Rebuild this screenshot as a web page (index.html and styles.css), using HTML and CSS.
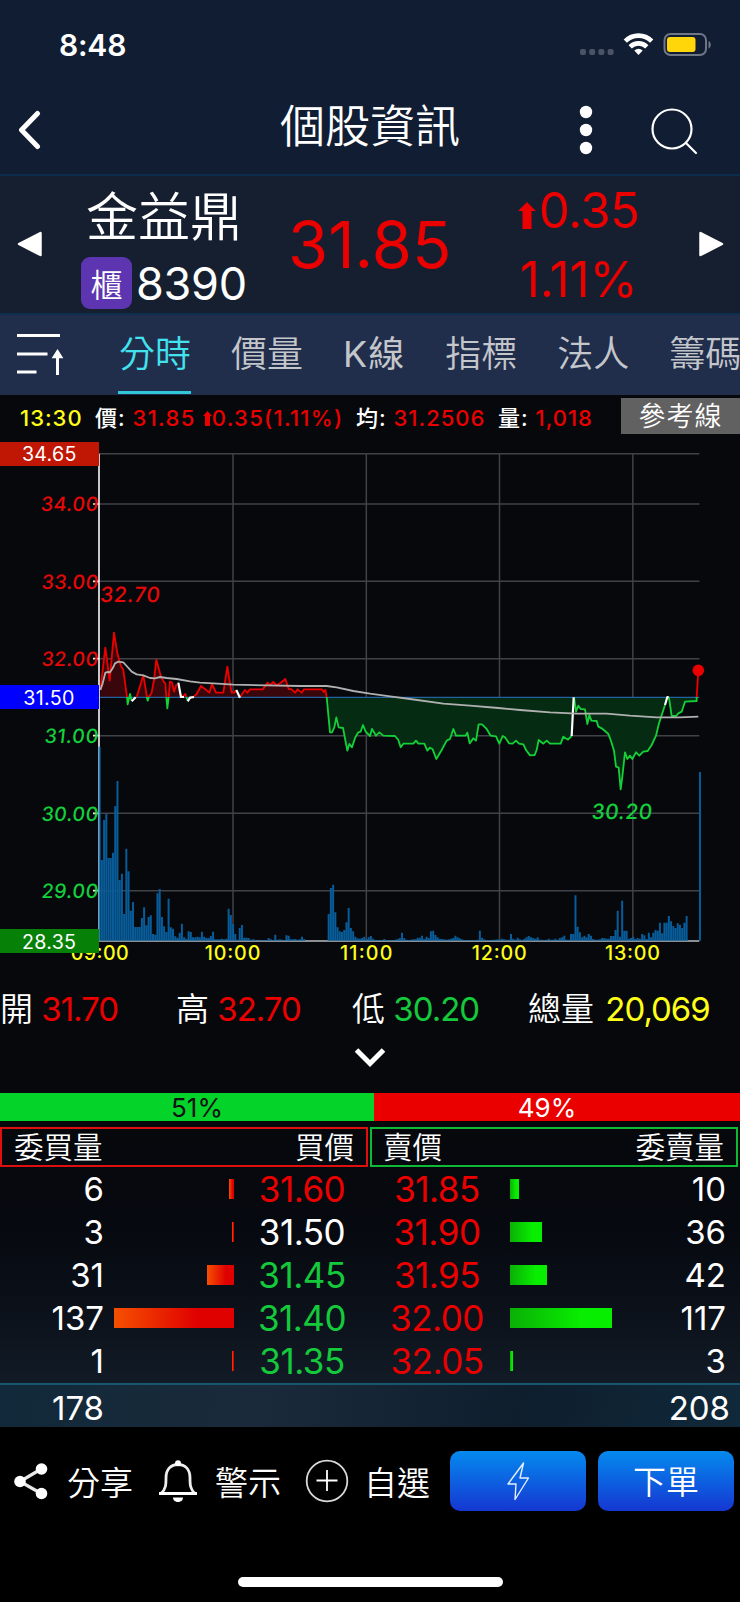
FILE: index.html
```html
<!DOCTYPE html>
<html lang="zh-Hant">
<head>
<meta charset="utf-8">
<title>個股資訊</title>
<link rel="stylesheet" href="styles.css">
</head>
<body>
<div class="app">
  <div class="status">
    <span class="clock">8:48</span>
    <svg class="status-icons" width="136" height="26" viewBox="0 0 136 26">
      <g fill="#4b5467"><rect x="2" y="18" width="6" height="6" rx="2"/><rect x="11.200" y="18" width="6" height="6" rx="2"/><rect x="20.400" y="18" width="6" height="6" rx="2"/><rect x="29.600" y="18" width="6" height="6" rx="2"/></g>
      <g fill="none" stroke="#fff" stroke-width="4.600"><path d="M47.300 10.200a18.500 18.500 0 0 1 26.400 0"/><path d="M52.200 15.800a11.800 11.800 0 0 1 16.600 0"/></g>
      <path d="M56.300 19.500a6.500 6.500 0 0 1 8.400 0L60.500 24z" fill="#fff"/>
      <rect x="86.500" y="3" width="41.500" height="21" rx="6" fill="none" stroke="#6f7787" stroke-width="2"/>
      <rect x="89" y="6" width="28.500" height="15" rx="3" fill="#ffd60a"/>
      <path d="M130.500 10c3 1 3 6.500 0 7.500z" fill="#6f7787"/>
    </svg>
  </div>
  <header class="header">
    <svg class="back" width="24" height="40" viewBox="0 0 24 40"><path d="M20.500 3.500 4.500 20l16 16.500" fill="none" stroke="#fff" stroke-width="5" stroke-linecap="round" stroke-linejoin="round"/></svg>
    <h1 class="title">個股資訊</h1>
    <svg class="more" width="14" height="50" viewBox="0 0 14 50" fill="#fff"><circle cx="7" cy="7" r="6.200"/><circle cx="7" cy="25" r="6.200"/><circle cx="7" cy="43" r="6.200"/></svg>
    <svg class="search" width="48" height="48" viewBox="0 0 48 48" fill="none" stroke="#fff" stroke-width="2.200" stroke-linecap="round"><circle cx="22" cy="22" r="19.500"/><path d="M36 36l10 10"/></svg>
  </header>
  <section class="stock">
    <svg class="prev" width="26" height="28" viewBox="0 0 26 28"><path d="M2 14 23.500 3v22z" fill="#fff" stroke="#fff" stroke-width="2.500" stroke-linejoin="round"/></svg>
    <div class="ident">
      <div class="name">金益鼎</div>
      <div class="code-row"><span class="badge">櫃</span><span class="code">8390</span></div>
    </div>
    <div class="price">31.85</div>
    <div class="change">
      <div class="delta"><svg width="18" height="27" viewBox="0 0 18 27"><path d="M9 0l9 9h-4.500v18h-9V9H0z" fill="#eb0000"/></svg><span>0.35</span></div>
      <div class="percent">1.11%</div>
    </div>
    <svg class="next" width="26" height="28" viewBox="0 0 26 28"><path d="M24 14 2.500 3v22z" fill="#fff" stroke="#fff" stroke-width="2.500" stroke-linejoin="round"/></svg>
  </section>
  <nav class="tabs">
    <svg class="sort" width="50" height="46" viewBox="0 0 50 46" stroke="#fff" stroke-width="3"><path d="M0 3.500h43M0 22h30.500M0 40h19.500M40.500 43V24"/><path d="M40.500 18.500l4.500 7h-9z" fill="#fff" stroke-width="1.500"/></svg>
    <span class="tab active">分時</span><span class="tab">價量</span><span class="tab kline">K線</span><span class="tab">指標</span><span class="tab">法人</span><span class="tab">籌碼</span>
  </nav>
  <section class="tick">
    <span class="yellow t-time">13:30</span>
    <span class="t-price">價: <b class="red">31.85 <svg width="9" height="15" viewBox="0 0 9 15"><path d="M4.500 0 9 5H7v10H2V5H0z" fill="#eb0000"/></svg>0.35(1.11%)</b></span>
    <span class="t-avg">均: <b class="red">31.2506</b></span>
    <span class="t-vol">量: <b class="red">1,018</b></span>
    <span class="ref-line">參考線</span>
  </section>
  <svg class="chart" width="740" height="530" viewBox="0 150 2220 1590">
    <g stroke="#404248" stroke-width="4.500" fill="none">
      <path d="M297 191H2098M297 342H2098M297 574H2098M297 806H2098M297 1037H2098M297 1270H2098M297 1502H2098"/>
      <path d="M699 191V1652M1099 191V1652M1498.500 191V1652M1898.500 191V1652"/>
    </g>
    <path class="fill-down" d="M980 921L990 1027 996 1027 1003 1012 1009 982 1016 1012 1029 1014 1042 1082 1048 1062 1056 1072 1066 1042 1075 1027 1082 1025 1089 1005 1097 1025 1110 1038 1116 1017 1128 1037 1138 1027 1150 1037 1185 1038 1195 1050 1202 1072 1210 1061 1240 1061 1248 1052 1255 1061 1273 1061 1282 1082 1290 1073 1298 1078 1309 1107 1325 1080 1340 1052 1350 1047 1360 1017 1368 1037 1397 1037 1402 1028 1409 1060 1420 1045 1428 1052 1436 1003 1446 1003 1460 1017 1472 1037 1488 1039 1498 1061 1508 1038 1515 1042 1527 1060 1538 1061 1548 1052 1557 1061 1570 1063 1578 1080 1590 1096 1604 1095 1610 1080 1616 1050 1630 1061 1640 1052 1650 1061 1682 1061 1690 1040 1704 1049 1715 1038 1721 922 1728 965 1735 947 1742 957 1755 958 1762 1002 1768 975 1774 992 1790 993 1795 1010 1805 1015 1815 1023 1825 1032 1832 1050 1842 1082 1848 1130 1856 1133 1862 1198 1867 1160 1875 1087 1882 1107 1890 1097 1897 1107 1908 1087 1918 1097 1930 1085 1943 1083 1955 1065 1968 1037 1977 1000 1995 945 2002 921 2006 921 2015 978 2035 970 2045 965 2055 935 2090 933 2090 921z"/>
    <path class="fill-up" d="M301 921V900L316 773 329 872 342 728 352 790 362 826 370 840 381 921 410 921 430 856 441 921 455 908 462 870 469 809 483 860 493 878 499 921 506 921 510 875 516 878 522 905 535 880 543 921 580 921 603 888 628 908 636 882 648 908 670 908 682 830 695 908 710 900 720 921 735 900 742 908 750 898 788 898 803 878 810 886 820 876 830 886 842 878 856 867 866 897 875 898 885 908 893 898 905 908 912 898 976 900 980 921z"/>
    <path d="M297 922H2098" stroke="#2461a0" stroke-width="4"/>
    <g fill="none" stroke-width="5.500" stroke-linejoin="round">
      <path stroke="#eb0000" d="M301 900L316 773 329 872 342 728 352 790 362 826 370 840 381 921M410 921L430 856 441 921M447 921L455 908 462 870 469 809 483 860 493 878 496 880 499 921M506 921L510 875 516 878 522 905 530 882M547 921L556 912 559 921M580 921L590 912 603 888 615 897 628 908 636 882 648 908 670 908 682 830 690 880 695 908 703 908 708 900M720 921L735 900 742 908 750 898 788 898 803 878 810 886 820 876 830 886 842 878 856 867 866 897 875 898 885 908 893 898 905 908 912 898 966 898 971 906 976 900 980 921M2090 921L2095 842"/>
      <path stroke="#14cf38" d="M381 921L383 943 390 912 395 932M440 921L443 932 447 921M499 921L502 955 506 921M559 921L563 932M980 921L990 1027 996 1027 1003 1012 1009 982 1016 1012 1029 1014 1042 1082 1048 1062 1056 1072 1066 1042 1075 1027 1082 1025 1089 1005 1097 1025 1110 1038 1116 1017 1128 1037 1138 1027 1150 1037 1185 1038 1195 1050 1202 1072 1210 1061 1240 1061 1248 1052 1255 1061 1273 1061 1282 1082 1290 1073 1298 1078 1309 1107 1325 1080 1340 1052 1350 1047 1360 1017 1368 1037 1397 1037 1402 1028 1409 1060 1420 1045 1428 1052 1436 1003 1446 1003 1460 1017 1472 1037 1488 1039 1498 1061 1508 1038 1515 1042 1527 1060 1538 1061 1548 1052 1557 1061 1570 1063 1578 1080 1590 1096 1604 1095 1610 1080 1616 1050 1630 1061 1640 1052 1650 1061 1682 1061 1690 1040 1704 1049 1715 1038M1722 922L1728 965 1735 947 1742 957 1755 958 1762 1002 1768 975 1774 992 1790 993 1795 1010 1805 1015 1815 1023 1825 1032 1832 1050 1842 1082 1848 1130 1856 1133 1862 1198 1867 1160 1875 1087 1882 1107 1890 1097 1897 1107 1908 1087 1918 1097 1930 1085 1943 1083 1955 1065 1968 1037 1977 1000 1995 945M2006 921L2008 930 2015 978 2028 978 2035 970 2045 965 2055 935 2090 933V921"/>
      <path stroke="#fff" stroke-width="6.500" d="M395 934L407 922M535 878L539 900 543 921 552 921M563 934L570 923 582 921M709 900L720 923M1715 1038L1721 922M1995 945L2002 921 2006 921"/>
      <path stroke="#b0b0b0" d="M301 900L308 880 316 848 324 846 330 847 338 835 345 820 355 815 370 817 380 828 395 845 410 853 430 856 450 864 465 865 480 861 500 864 530 867 570 874 600 878 640 880 700 884 800 886 900 888 980 888 1010 892 1060 903 1110 911 1170 919 1230 927 1330 941 1410 947 1495 954 1560 960 1650 967 1730 971 1820 971 1890 977 1970 982 2040 982 2095 980"/>
    </g>
    <circle cx="2095" cy="841" r="17.500" fill="#eb0000"/>
    <path d="M297 191V1652M279 342h18M279 574h18M279 806h18M279 1037h18M279 1270h18M279 1502h18" stroke="#eee" stroke-width="5"/>
    <path d="M295 1653H2098" stroke="#b9bcc0" stroke-width="4"/>
    <path id="volume" stroke="#075c99" stroke-width="6"/>
    <path d="M297 1070V1652" stroke="#5b9cc8" stroke-width="3"/>
    <g class="axis slanted red">
      <text x="123" y="364" textLength="172">34.00</text><text x="125" y="596" textLength="170">33.00</text><text x="125" y="828" textLength="170">32.00</text>
      <text class="peak" x="301" y="636" textLength="179">32.70</text>
    </g>
    <g class="axis slanted green">
      <text x="134" y="1060" textLength="161">31.00</text><text x="125" y="1293" textLength="170">30.00</text><text x="125" y="1525" textLength="170">29.00</text>
      <text class="peak" x="1775" y="1286" textLength="182">30.20</text>
    </g>
    <g class="axis yellow">
      <text x="212" y="1711" textLength="174">09:00</text><text x="614" y="1711" textLength="167">10:00</text><text x="1020" y="1711" textLength="157">11:00</text><text x="1415" y="1711" textLength="165">12:00</text><text x="1815" y="1711" textLength="165">13:00</text>
    </g>
    <rect x="0" y="156" width="297" height="72" fill="#c01604"/><rect x="0" y="885" width="297" height="72" fill="#00f"/><rect x="0" y="1617" width="297" height="72" fill="#078007"/>
    <g class="box"><text x="66" y="214" textLength="163">34.65</text><text x="70" y="944" textLength="153">31.50</text><text x="66" y="1676" textLength="162">28.35</text></g>
  </svg>
  <section class="ohlc">
    <div>開 <span class="red">31.70</span></div><div>高 <span class="red">32.70</span></div><div>低 <span class="green">30.20</span></div><div class="total">總量 <span class="yellow">20,069</span></div>
  </section>
  <div class="expand"><svg width="34" height="22" viewBox="0 0 34 22"><path d="M3.500 4 17 17.500 30.500 4" fill="none" stroke="#fff" stroke-width="5"/></svg></div>
  <div class="ratio"><div class="buy">51%</div><div class="sell">49%</div></div>
  <section class="book">
    <div class="book-head"><div class="bid-head"><span>委買量</span><span>買價</span></div><div class="ask-head"><span>賣價</span><span>委賣量</span></div></div>
    <div class="book-row"><span class="qty">6</span><span class="bar"><i style="width:5px"></i></span><span class="p red">31.60</span><span class="p red">31.85</span><span class="bar ask"><i style="width:9px"></i></span><span class="qty">10</span></div>
    <div class="book-row"><span class="qty">3</span><span class="bar"><i style="width:2.500px"></i></span><span class="p">31.50</span><span class="p red">31.90</span><span class="bar ask"><i style="width:32px"></i></span><span class="qty">36</span></div>
    <div class="book-row"><span class="qty">31</span><span class="bar"><i style="width:27px"></i></span><span class="p green">31.45</span><span class="p red">31.95</span><span class="bar ask"><i style="width:37px"></i></span><span class="qty">42</span></div>
    <div class="book-row"><span class="qty">137</span><span class="bar"><i style="width:120px"></i></span><span class="p green">31.40</span><span class="p red">32.00</span><span class="bar ask"><i style="width:102px"></i></span><span class="qty">117</span></div>
    <div class="book-row"><span class="qty">1</span><span class="bar"><i style="width:2px"></i></span><span class="p green">31.35</span><span class="p red">32.05</span><span class="bar ask"><i style="width:3px"></i></span><span class="qty">3</span></div>
    <div class="book-total"><span class="sum-bid">178</span><span class="sum-ask">208</span></div>
  </section>
  <footer class="actions">
    <span class="action"><svg width="36" height="40" viewBox="0 0 36 40"><path d="M29 7.500 7 20.500 29 33" fill="none" stroke="#e8e8e8" stroke-width="3.200"/><g fill="#fff"><circle cx="28.500" cy="8" r="5.800"/><circle cx="7" cy="20.500" r="5.800"/><circle cx="28.500" cy="32.500" r="5.800"/></g></svg>分享</span>
    <span class="action"><svg width="40" height="44" viewBox="0 0 40 44"><path d="M3 34.500c5-4.500 5-9 5-15.500C8 10 13 5.500 20 5.500S32 10 32 19c0 6.500 0 11 5 15.500z" fill="none" stroke="#eee" stroke-width="2.800" stroke-linejoin="round"/><path d="M1 33h38v3H1z" fill="#fff"/><circle cx="20" cy="4.200" r="3" fill="#fff"/><path d="M15 38.500h10c0 6-10 6-10 0z" fill="#fff"/></svg>警示</span>
    <span class="action"><svg width="44" height="44" viewBox="0 0 44 44" fill="none" stroke="#d8d8d8" stroke-width="1.800"><circle cx="22" cy="22" r="20.300"/><path d="M11.500 21.500h21M22 11v21" stroke="#fff"/></svg>自選</span>
    <span class="btn"><svg width="24" height="42" viewBox="0 0 24 42"><path d="M17.500 3 2 24h8L9 39.500 22.500 18H14z" fill="none" stroke="#e4f0ff" stroke-width="1.400" stroke-linejoin="round"/></svg></span>
    <span class="btn">下單</span>
  </footer>
  <div class="home"></div>
</div>
<script src="volume.js"></script>
</body>
</html>
```
FILE: styles.css
```css
* { box-sizing: border-box; }
body { margin: 0; background: #000; color: #fff; font-family: Inter, "Noto Sans CJK TC", sans-serif; font-weight: 350; }
.app { width: 740px; height: 1602px; overflow: hidden; display: flex; flex-direction: column; background: #000; }
.app > * { flex: none; }
.red { color: #eb0000; fill: #e60808; }
.green { color: #14c93b; fill: #14cf3b; }
.yellow { color: #ffff17; fill: #ffff17; }

.status { height: 80px; padding: 31px 26px 0 59px; display: flex; justify-content: space-between; background: #111d32; }
.clock { font-size: 30px; line-height: 29px; font-weight: 600; letter-spacing: -.2px; }
.header { height: 96px; padding: 6px 42px 0 17px; display: grid; grid-template-columns: 24px 1fr 14px 87px; align-items: center; background: #111d32; border-bottom: 2px solid #0d2c4c; }
.title { margin: 0; padding: 0 0 6px 239px; font-size: 45px; line-height: 60px; font-weight: 350; white-space: nowrap; }
.more { margin-left: -18px; }
.search { margin: 2px 0 0 39px; }

.stock { height: 139px; padding: 0 16px; display: grid; grid-template-columns: 27px 205px 208px 1fr 25px; align-items: center; background: #151f2f; border-bottom: 2px solid #0d3050; }
.prev { margin-left: 1px; }
.prev, .next { margin-bottom: 1px; }
.next { margin-left: -1px; }
.ident { padding: 4px 0 0 38px; }
.name { height: 73px; margin-left: 5px; font-size: 52px; line-height: 70px; white-space: nowrap; }
.code-row { display: flex; align-items: center; gap: 4px; }
.badge { width: 51px; height: 52px; border-radius: 9px; display: flex; align-items: center; justify-content: center; background: #5d35b0; font-size: 32px; }
.code { font-size: 45px; font-weight: 400; letter-spacing: -.3px; }
.price { padding-left: 40px; font-size: 65px; font-weight: 400; color: #eb0000; white-space: nowrap; }
.change { padding-left: 62px; color: #eb0000; font-size: 49px; font-weight: 400; }
.delta { height: 68px; display: flex; align-items: center; gap: 3px; letter-spacing: -.5px; }
.delta svg { margin-top: 10px; }
.percent { height: 68px; padding-left: 2px; line-height: 70px; }

.tabs { height: 80px; padding-left: 18px; display: flex; align-items: flex-start; overflow: hidden; background: #202d4b; white-space: nowrap; }
.sort { flex: none; margin: 17px 51px 0 -1px; }
.tab { flex: none; height: 79px; margin-right: 39px; padding-left: 1px; font-size: 36px; line-height: 79px; color: #c3c6ca; border-bottom: 3px solid transparent; }
.kline { padding-left: 1px; letter-spacing: 1px; font-weight: 375; }
.tab.active { color: #42e2ee; border-color: #30c7da; }

.tick { height: 45px; padding-left: 20px; display: grid; grid-template-columns: 75px 261px 142px 123px 119px; align-items: center; background: #06080c; font-size: 22px; font-weight: 500; line-height: 41px; letter-spacing: 1px; white-space: nowrap; }
.tick > span { padding-top: 1px; }
.tick b { font-weight: 500; }
.t-price b { letter-spacing: 1.300px; }
.tick .ref-line { height: 36px; margin-bottom: 3px; padding: 0; text-align: center; background: #616161; font-size: 27px; line-height: 37px; font-weight: 350; }
.chart { display: block; background: #06080c; font-family: Inter, sans-serif; }
.fill-up { fill: #38060b; }
.fill-down { fill: #052b12; }
.axis { font-size: 59px; font-weight: 520; }
.slanted text { transform-box: fill-box; transform-origin: 50% 50%; transform: skewX(-6deg); }
.peak { font-size: 63px; }
.box { font-size: 59px; fill: #fff; font-weight: 400; }

.ohlc { height: 70px; padding-top: 4px; display: grid; grid-template-columns: 176px 176px 176px 1fr; align-items: center; background: #06080c; font-size: 33px; white-space: nowrap; }
.ohlc span { margin-left: -1px; font-weight: 400; letter-spacing: -1px; }
.ohlc .total span { margin-left: 2px; }
.expand { height: 53px; padding-top: 6px; text-align: center; background: #06080c; }
.ratio { height: 28px; display: flex; font-size: 26px; font-weight: 400; line-height: 30px; text-align: center; }
.buy { width: 374px; padding-left: 20px; background: #04d42a; color: #111; }
.sell { flex: 1; padding-right: 20px; background: #eb0000; }

.book { height: 306px; background: linear-gradient(#06080c 0, #06090f 35%, #0b1019 60%, #121c27 88%, #162633 100%); }
.book-head { height: 47px; padding-top: 6px; display: flex; gap: 2px; font-size: 29.500px; }
.book-head div { width: 368px; height: 40px; padding: 0 12px; display: flex; justify-content: space-between; align-items: center; line-height: 34px; border: 2px solid #e00f0f; }
.book-head .ask-head { padding-left: 11px; border-color: #10b935; }
.book-row { height: 43px; padding-bottom: 1px; display: grid; grid-template-columns: 104px 130px 136px 134px 126px 96px; align-items: center; font-weight: 400; }
.qty { text-align: right; font-size: 33px; }
.p { text-align: center; font-size: 35px; letter-spacing: -.5px; }
.bar { height: 20px; display: flex; justify-content: flex-end; }
.bar i { background: linear-gradient(90deg, #f65000, #df0000 70%); }
.bar.ask { justify-content: flex-start; padding-left: 6px; }
.bar.ask i { background: linear-gradient(90deg, #0ab006, #08ee00 70%); }
.book-total { height: 44px; padding: 3px 10px 0 0; display: flex; align-items: center; justify-content: space-between; border-top: 2px solid #18566f; background: linear-gradient(100deg, #11293a, #1a2a3a 35%, #0e1e2d 70%, #10293a); font-size: 33px; font-weight: 400; }
.sum-bid { width: 104px; text-align: right; }

.actions { height: 108px; padding: 0 6px 0 13px; display: grid; grid-template-columns: 145px 147px 145px 136px 136px; align-items: center; font-size: 33px; }
.action { display: flex; align-items: center; gap: 17px; }
.action:first-child { gap: 18px; }
.action svg { margin-top: -1px; }
.action:nth-child(3) { gap: 15px; }
.btn { height: 60px; display: flex; align-items: center; justify-content: center; border-radius: 10px; background: linear-gradient(#058aee, #1537d2); }
.btn:last-child { margin-left: 12px; width: 136px; padding-bottom: 2px; }
.home { width: 265px; height: 10px; margin: 42px 0 0 238px; border-radius: 5px; background: #fff; }
```
FILE: volume.js
```js
// Volume per minute from 09:00; each value is a bar height in chart units.
const volume = [
  582, 242, 362, 380, 248, 248, 264, 404, 479, 182, 201, 80, 276, 208, 90, 116, 41, 41, 41, 68,
  100, 46, 71, 76, 20, 18, 142, 155, 71, 43, 26, 126, 40, 36, 13, 9, 23, 51, 10, 6,
  28, 26, 10, 10, 12, 10, 27, 12, 8, 8, 14, 27, 4, 4, 4, 6, 4, 6, 96, 77,
  50, 20, 3, 38, 47, 9, 9, 8, 3, 4, 3, 1, 3, 2, 2, 2, 8, 4, 2, 18,
  3, 4, 3, 2, 16, 15, 4, 4, 5, 3, 4, 12, 5, 0, 0, 0, 0, 0, 0, 0,
  0, 0, 0, 80, 158, 168, 85, 40, 28, 26, 32, 55, 98, 38, 28, 12, 7, 6, 8, 12,
  5, 10, 14, 6, 2, 2, 2, 2, 5, 2, 2, 2, 2, 3, 5, 8, 24, 8, 3, 2,
  3, 4, 4, 9, 9, 15, 5, 12, 8, 28, 30, 17, 10, 6, 5, 4, 3, 4, 6, 8,
  15, 10, 7, 4, 2, 2, 2, 2, 2, 2, 3, 30, 9, 4, 2, 2, 2, 3, 3, 4,
  3, 6, 4, 3, 3, 20, 6, 3, 9, 4, 2, 6, 10, 14, 10, 8, 6, 10, 3, 3,
  2, 3, 6, 3, 3, 6, 3, 8, 10, 15, 3, 3, 20, 20, 136, 42, 25, 10, 15, 10,
  20, 15, 5, 3, 3, 4, 8, 8, 6, 6, 14, 14, 32, 90, 12, 120, 30, 30, 6, 8,
  12, 5, 8, 6, 20, 16, 5, 24, 10, 24, 32, 30, 54, 22, 54, 54, 74, 58, 44, 38,
  52, 48, 38, 54, 74, 0, 0, 0, 0, 0, 506
];
const pitch = 6.67;
document.getElementById("volume").setAttribute("d",
  volume.map((h, i) => h ? `M${(299 + i * pitch).toFixed(1)} 1652v${-h}` : "").join(""));
```
